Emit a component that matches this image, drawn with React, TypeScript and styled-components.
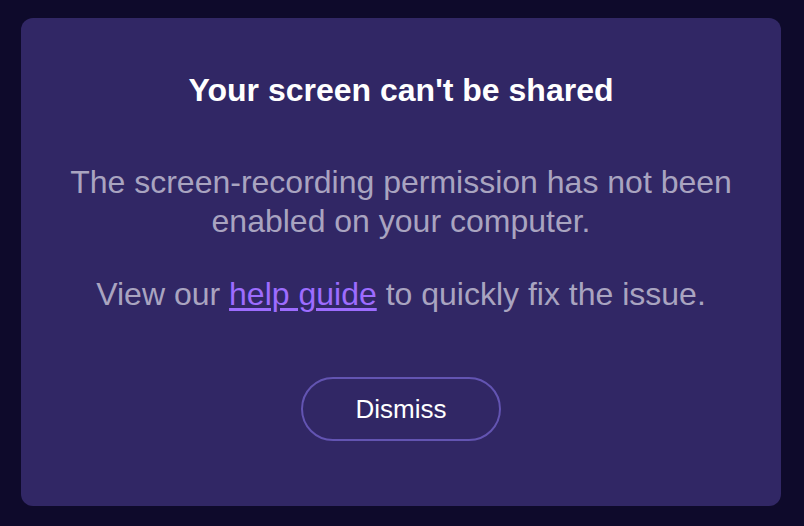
import React from 'react';
import styled, { createGlobalStyle } from 'styled-components';

const GlobalStyle = createGlobalStyle`
  html, body {
    margin: 0;
    padding: 0;
    background: #0e0a2b;
    font-family: "Liberation Sans", Arial, sans-serif;
  }
`;

const Page = styled.div`
  width: 804px;
  height: 526px;
  box-sizing: border-box;
  padding: 18px 23px 20px 21px;
  display: flex;
`;

const Card = styled.div`
  flex: 1;
  background: #312765;
  border-radius: 12px;
  display: flex;
  flex-direction: column;
  align-items: center;
  padding-top: 52px;
  text-align: center;
`;

const Title = styled.h1`
  margin: 0;
  color: #ffffff;
  font-size: 32px;
  font-weight: 700;
  line-height: 40px;
`;

const Message = styled.p`
  margin: 0;
  color: #a9a4c0;
  font-size: 32px;
  line-height: 39px;
  max-width: 700px;
`;

const Lead = styled(Message)`
  margin-top: 53px;
`;

const Hint = styled(Message)`
  margin-top: 34px;
`;

const HelpLink = styled.a`
  color: #9d6cff;
  text-decoration: underline;
  text-underline-offset: 3px;
`;

const DismissButton = styled.button`
  margin-top: 63px;
  width: 200px;
  height: 64px;
  border-radius: 32px;
  border: 2px solid #6354b2;
  background: transparent;
  color: #ffffff;
  font-family: inherit;
  font-size: 26px;
  cursor: pointer;
`;

export default function App() {
  return (
    <>
      <GlobalStyle />
      <Page>
        <Card>
          <Title>Your screen can't be shared</Title>
          <Lead>
            The screen-recording permission has not been enabled on your computer.
          </Lead>
          <Hint>
            View our <HelpLink href="#">help guide</HelpLink> to quickly fix the issue.
          </Hint>
          <DismissButton>Dismiss</DismissButton>
        </Card>
      </Page>
    </>
  );
}
